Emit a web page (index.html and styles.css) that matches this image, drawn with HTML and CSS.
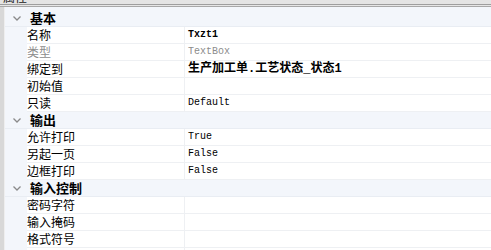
FILE: index.html
```html
<!DOCTYPE html>
<html lang="zh">
<head>
<meta charset="utf-8">
<link rel="stylesheet" href="styles.css">
</head>
<body>
<div class="panel">
  <div class="title"><span class="title-text">属性</span></div>
  <div class="title-sep"></div>
  <div class="frame">
    <div class="edge"></div>
    <div class="grid">
      <div class="cat"><span class="gut"><svg class="chev" width="8" height="5" viewBox="0 0 8 5"><polyline points="0.5,0.5 4,4 7.5,0.5" fill="none" stroke="#8a8a8a" stroke-width="1.3"/></svg></span><span class="cat-name">基本</span></div>
      <div class="row"><span class="gut"></span><span class="name">名称</span><span class="val bold">Txzt1</span></div>
      <div class="row"><span class="gut"></span><span class="name dim">类型</span><span class="val dim">TextBox</span></div>
      <div class="row"><span class="gut"></span><span class="name">绑定到</span><span class="val bold cjk">生产加工单.工艺状态_状态1</span></div>
      <div class="row"><span class="gut"></span><span class="name">初始值</span><span class="val"></span></div>
      <div class="row"><span class="gut"></span><span class="name">只读</span><span class="val">Default</span></div>
      <div class="cat"><span class="gut"><svg class="chev" width="8" height="5" viewBox="0 0 8 5"><polyline points="0.5,0.5 4,4 7.5,0.5" fill="none" stroke="#8a8a8a" stroke-width="1.3"/></svg></span><span class="cat-name">输出</span></div>
      <div class="row"><span class="gut"></span><span class="name">允许打印</span><span class="val">True</span></div>
      <div class="row"><span class="gut"></span><span class="name">另起一页</span><span class="val">False</span></div>
      <div class="row"><span class="gut"></span><span class="name">边框打印</span><span class="val">False</span></div>
      <div class="cat"><span class="gut"><svg class="chev" width="8" height="5" viewBox="0 0 8 5"><polyline points="0.5,0.5 4,4 7.5,0.5" fill="none" stroke="#8a8a8a" stroke-width="1.3"/></svg></span><span class="cat-name">输入控制</span></div>
      <div class="row"><span class="gut"></span><span class="name">密码字符</span><span class="val"></span></div>
      <div class="row"><span class="gut"></span><span class="name">输入掩码</span><span class="val"></span></div>
      <div class="row"><span class="gut"></span><span class="name">格式符号</span><span class="val"></span></div>
      <div class="row"><span class="gut"></span><span class="name">最大长度</span><span class="val"></span></div>
    </div>
  </div>
</div>
</body>
</html>
```
FILE: styles.css
```css
html, body {
  margin: 0;
  padding: 0;
  background: #ffffff;
}
.panel {
  width: 491px;
  height: 250px;
  overflow: hidden;
  font-family: "Noto Sans CJK SC", "Noto Sans", sans-serif;
  font-size: 12px;
  color: #000;
}
.title {
  height: 4px;
  background: #e4e4e4;
  overflow: hidden;
  position: relative;
}
.title-text {
  display: block;
  padding-left: 3px;
  font-size: 12px;
  line-height: 12px;
  margin-top: -9px;
  color: #222;
}
.title-sep {
  height: 1px;
  background: #e6e6e6;
  border-top: 1px solid #9e9e9e;
  border-bottom: 1px solid #a8a8a8;
}
.frame {
  display: flex;
  background: #f3f6fb;
}
.edge {
  width: 4px;
  background: #d8d8d8;
  border-right: 1px solid #eeeeee;
}
.grid {
  flex: 1;
  display: flex;
  flex-direction: column;
  padding-top: 3px;
  background: #f3f6fb;
}
.row {
  display: grid;
  grid-template-columns: 22px 158px 1fr;
  height: 17px;
}
.gut {
  background: #f3f6fb;
  display: flex;
  align-items: center;
  justify-content: center;
}
.name, .val {
  background: #ffffff;
  border-bottom: 1px solid #eef0f3;
  line-height: 16px;
  white-space: nowrap;
  overflow: hidden;
}
.name {
  border-right: 1px solid #eef0f3;
  padding-left: 0;
}
.val {
  padding-left: 3px;
  font-family: "Liberation Mono", monospace;
  font-size: 10px;
}
.val.cjk {
  font-family: "Liberation Mono", "Noto Sans CJK SC", monospace;
  font-size: 12px;
}
.bold {
  font-weight: bold;
}
.dim {
  color: #8c8c8c;
}
.cat {
  display: grid;
  grid-template-columns: 22px 1fr;
  height: 16px;
  border-bottom: 1px solid #e9edf3;
  background: #f3f6fb;
  font-weight: bold;
  line-height: 16px;
}
.cat-name {
  padding-left: 3px;
  font-size: 13px;
}
.chev {
  display: block;
  margin-left: 1px;
}
```
